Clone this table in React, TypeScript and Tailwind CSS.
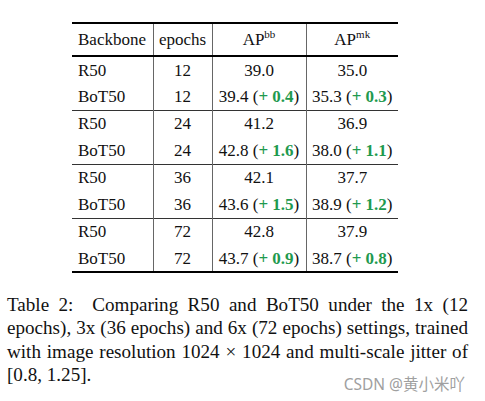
import React from "react";

const G = ({ v }: { v: string }) => (
  <>
    {" ("}
    <span className="text-[#1f9a4f] font-bold">+ {v}</span>
    {")"}
  </>
);

type Row = { b: string; e: string; bb: React.ReactNode; mk: React.ReactNode };

const groups: Row[][] = [
  [
    { b: "R50", e: "12", bb: "39.0", mk: "35.0" },
    { b: "BoT50", e: "12", bb: <>39.4<G v="0.4" /></>, mk: <>35.3<G v="0.3" /></> },
  ],
  [
    { b: "R50", e: "24", bb: "41.2", mk: "36.9" },
    { b: "BoT50", e: "24", bb: <>42.8<G v="1.6" /></>, mk: <>38.0<G v="1.1" /></> },
  ],
  [
    { b: "R50", e: "36", bb: "42.1", mk: "37.7" },
    { b: "BoT50", e: "36", bb: <>43.6<G v="1.5" /></>, mk: <>38.9<G v="1.2" /></> },
  ],
  [
    { b: "R50", e: "72", bb: "42.8", mk: "37.9" },
    { b: "BoT50", e: "72", bb: <>43.7<G v="0.9" /></>, mk: <>38.7<G v="0.8" /></> },
  ],
];

export default function App() {
  return (
    <div
      className="w-[485px] h-[401px] bg-white text-[#111] relative overflow-hidden"
      style={{ fontFamily: '"Liberation Serif", "Times New Roman", serif' }}
    >
      <div className="pt-[22px] pl-[72px]">
        <table className="border-collapse text-[17px] leading-none" style={{ width: 326 }}>
          <colgroup>
            <col style={{ width: 81 }} />
            <col style={{ width: 59 }} />
            <col style={{ width: 94 }} />
            <col style={{ width: 92 }} />
          </colgroup>
          <thead>
            <tr className="h-[33px] border-t-2 border-b-2 border-black">
              <th className="font-normal text-left pl-[6px] border-r border-[#666]">Backbone</th>
              <th className="font-normal text-center border-r border-[#666]">epochs</th>
              <th className="font-normal text-center border-r border-[#666]">
                AP<span className="text-[11px] relative -top-[7px]">bb</span>
              </th>
              <th className="font-normal text-center">
                AP<span className="text-[11px] relative -top-[7px]">mk</span>
              </th>
            </tr>
          </thead>
          {groups.map((g, gi) => (
            <tbody
              key={gi}
              className={gi === groups.length - 1 ? "border-b-2 border-black" : "border-b border-[#333]"}
            >
              {g.map((r, ri) => (
                <tr key={ri} className="h-[27px]">
                  <td className="text-left pl-[6px] border-r border-[#666]">{r.b}</td>
                  <td className="text-center border-r border-[#666]">{r.e}</td>
                  <td className="text-center border-r border-[#666] whitespace-nowrap">{r.bb}</td>
                  <td className="text-center whitespace-nowrap">{r.mk}</td>
                </tr>
              ))}
            </tbody>
          ))}
        </table>
      </div>
      <div className="absolute left-[7px] top-[293px] w-[461px]">
        <p
          className="text-[19.1px] leading-[23.3px] text-justify"
          style={{ textAlignLast: "left" }}
        >
          Table 2:&nbsp; Comparing R50 and BoT50 under the 1x (12 epochs), 3x (36 epochs) and 6x (72 epochs)
          settings, trained with image resolution 1024 × 1024 and multi-scale jitter of{" "}
          <span className="inline-flex w-full items-start justify-between">
            <span>[0.8, 1.25].</span>
            <span
              className="relative top-[14px] mr-[3px] text-[15.5px] text-[#a0a0a0] leading-none"
              style={{ fontFamily: '"Noto Sans", "Noto Sans CJK SC", sans-serif' }}
            >
              CSDN @黄小米吖
            </span>
          </span>
        </p>
      </div>
    </div>
  );
}
